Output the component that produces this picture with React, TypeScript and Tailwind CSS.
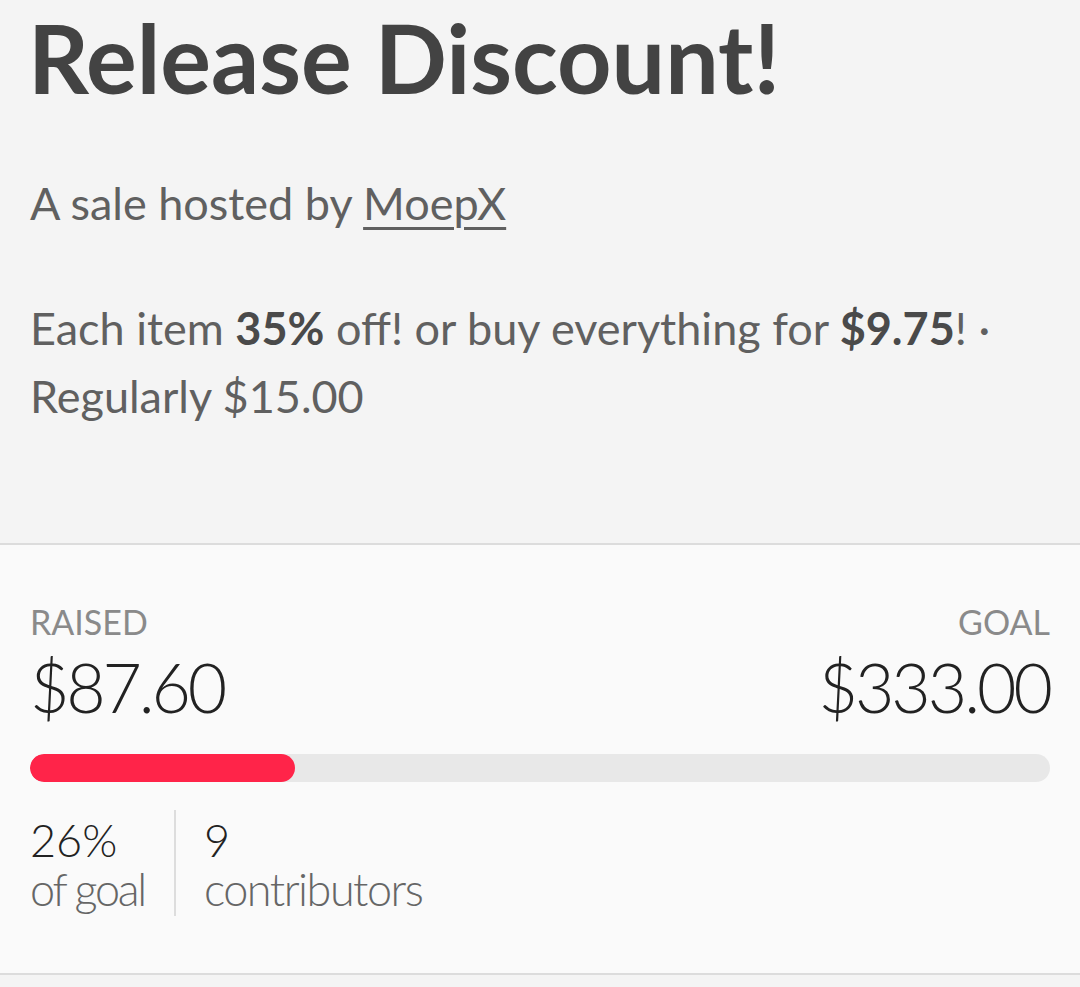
export default function App() {
  const raised = 87.6;
  const goal = 333;
  const pct = Math.round((raised / goal) * 100);

  return (
    <div className="min-h-[987px] bg-[#f4f4f4] font-['Lato','Noto_Sans',sans-serif]">
      <section className="px-[30px] pb-[113px]">
        <h1 className="-ml-[2px] text-[95px] font-bold leading-[1.2] text-[#434343]">Release Discount!</h1>
        <p className="mt-[56px] text-[45px] leading-[67.5px] text-[#606060]">
          A sale hosted by{" "}
          <a href="#" className="underline decoration-[3px] underline-offset-[7px]">
            MoepX
          </a>
        </p>
        <p className="mt-[56px] text-[45px] leading-[68px] text-[#606060]">
          Each item <strong className="font-bold text-[#4a4a4a]">35%</strong> off! or buy everything for{" "}
          <strong className="font-bold text-[#4a4a4a]">$9.75</strong>! · Regularly $15.00
        </p>
      </section>

      <section className="border-y-[2px] border-[#dcdcdc] bg-[#fafafa] px-[30px] pt-[57px] pb-[57px]">
        <div className="flex items-start justify-between">
          <div>
            <div className="text-[34px] leading-[1.2] uppercase text-[#8a8a8a]">Raised</div>
            <div className="mt-[4px] text-[68px] font-light leading-[1.2] tracking-[-3.2px] text-[#222]">
              ${raised.toFixed(2)}
            </div>
          </div>
          <div className="text-right">
            <div className="text-[34px] leading-[1.2] uppercase text-[#8a8a8a]">Goal</div>
            <div className="mt-[4px] text-[68px] font-light leading-[1.2] tracking-[-3px] text-[#222]">
              ${goal.toFixed(2)}
            </div>
          </div>
        </div>

        <div className="mt-[26px] h-[28px] overflow-hidden rounded-full bg-[#e8e8e8]">
          <div className="h-full rounded-full bg-[#ff2449]" style={{ width: `${pct}%` }} />
        </div>

        <div className="mt-[28px] flex">
          <div className="border-r-[2px] border-[#dddddd] pr-[29px] pt-[6px] pb-[2px]">
            <div className="text-[45px] font-light leading-[49px] text-[#222]">{pct}%</div>
            <div className="text-[45px] font-light leading-[49px] tracking-[-2.3px] text-[#666]">of goal</div>
          </div>
          <div className="pl-[28px] pt-[6px]">
            <div className="text-[45px] font-light leading-[49px] text-[#222]">9</div>
            <div className="text-[45px] font-light leading-[49px] tracking-[-1.5px] text-[#666]">contributors</div>
          </div>
        </div>
      </section>
    </div>
  );
}
